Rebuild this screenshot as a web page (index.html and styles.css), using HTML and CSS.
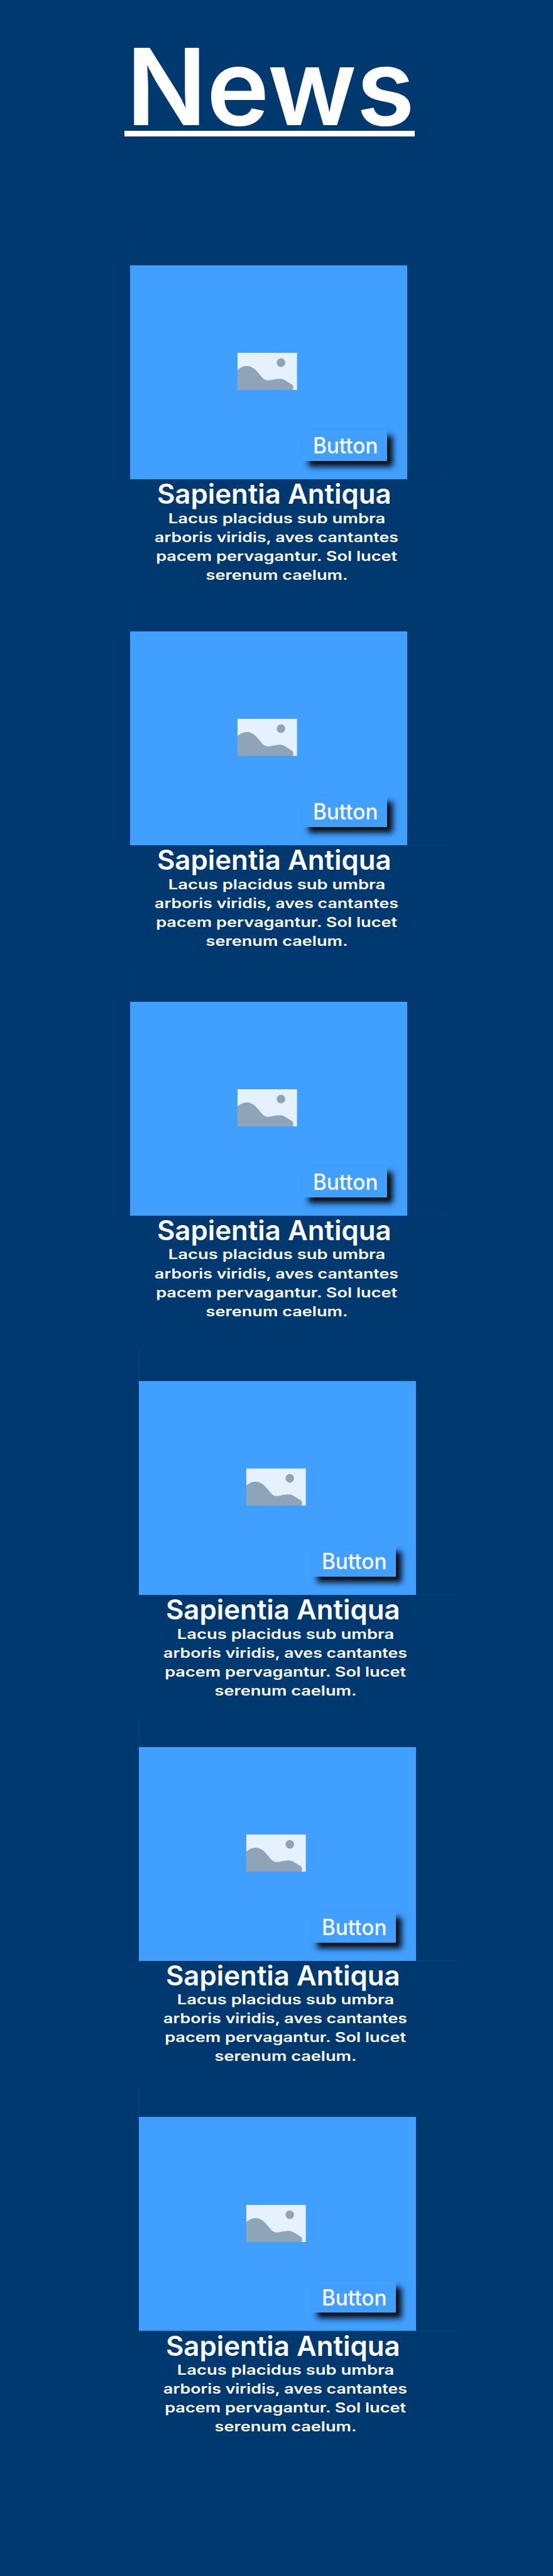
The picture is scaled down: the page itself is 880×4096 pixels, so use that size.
FILE: index.html
```
<!DOCTYPE html>
<html lang="la">
<head>
<meta charset="utf-8">
<title>News</title>
<link rel="stylesheet" href="styles.css">
</head>
<body>
<svg width="0" height="0" class="defs" aria-hidden="true">
  <symbol id="picture" viewBox="0 0 510 319" preserveAspectRatio="none">
    <rect width="510" height="319" fill="#e5f1ff"/>
    <path fill="#8fa3b9" d="M0 147C26 123 52 113 84 113C122 114 155 142 183 178C209 212 228 235 260 236C284 236 325 221 368 222C396 223 432 252 466 272Q477 280 477 290V306Q477 314 472 319H0Z"/>
    <circle cx="372" cy="84" r="36.500" fill="#8fa3b9"/>
  </symbol>
</svg>
<main class="page">
  <h1 class="heading"><span class="heading-text">News</span></h1>
  <section class="group first">
    <article class="card">
      <div class="media"><svg class="picture"><use href="#picture"/></svg><button class="btn"><span class="btn-text">Button</span></button></div>
      <h2 class="title"><span class="title-text">Sapientia Antiqua</span></h2>
      <p class="text"><span class="line first-line">Lacus placidus sub umbra</span><span class="line long">arboris viridis, aves cantantes</span><span class="line">pacem pervagantur. Sol lucet</span><span class="line">serenum caelum.</span></p>
    </article>
    <article class="card">
      <div class="media"><svg class="picture"><use href="#picture"/></svg><button class="btn"><span class="btn-text">Button</span></button></div>
      <h2 class="title"><span class="title-text">Sapientia Antiqua</span></h2>
      <p class="text"><span class="line first-line">Lacus placidus sub umbra</span><span class="line long">arboris viridis, aves cantantes</span><span class="line">pacem pervagantur. Sol lucet</span><span class="line">serenum caelum.</span></p>
    </article>
    <article class="card">
      <div class="media"><svg class="picture"><use href="#picture"/></svg><button class="btn"><span class="btn-text">Button</span></button></div>
      <h2 class="title"><span class="title-text">Sapientia Antiqua</span></h2>
      <p class="text"><span class="line first-line">Lacus placidus sub umbra</span><span class="line long">arboris viridis, aves cantantes</span><span class="line">pacem pervagantur. Sol lucet</span><span class="line">serenum caelum.</span></p>
    </article>
  </section>
  <section class="group second">
    <article class="card">
      <div class="media"><svg class="picture"><use href="#picture"/></svg><button class="btn"><span class="btn-text">Button</span></button></div>
      <h2 class="title"><span class="title-text">Sapientia Antiqua</span></h2>
      <p class="text"><span class="line first-line">Lacus placidus sub umbra</span><span class="line long">arboris viridis, aves cantantes</span><span class="line">pacem pervagantur. Sol lucet</span><span class="line">serenum caelum.</span></p>
    </article>
    <article class="card">
      <div class="media"><svg class="picture"><use href="#picture"/></svg><button class="btn"><span class="btn-text">Button</span></button></div>
      <h2 class="title"><span class="title-text">Sapientia Antiqua</span></h2>
      <p class="text"><span class="line first-line">Lacus placidus sub umbra</span><span class="line long">arboris viridis, aves cantantes</span><span class="line">pacem pervagantur. Sol lucet</span><span class="line">serenum caelum.</span></p>
    </article>
    <article class="card">
      <div class="media"><svg class="picture"><use href="#picture"/></svg><button class="btn"><span class="btn-text">Button</span></button></div>
      <h2 class="title"><span class="title-text">Sapientia Antiqua</span></h2>
      <p class="text"><span class="line first-line">Lacus placidus sub umbra</span><span class="line long">arboris viridis, aves cantantes</span><span class="line">pacem pervagantur. Sol lucet</span><span class="line">serenum caelum.</span></p>
    </article>
  </section>
</main>
</body>
</html>
```
FILE: styles.css
```
* { box-sizing: border-box; margin: 0; padding: 0; }

html, body { background: #003870; }

body {
  color: #fff;
  font-family: Inter, "Liberation Sans", sans-serif;
}

.defs { display: block; }

.page {
  height: 4096px;
  padding-top: 53.6px;
  overflow: hidden;
}

.heading {
  width: 461.2px;
  height: 163.2px;
  margin-left: 198.4px;
  padding-left: 2.5px;
  border-bottom: 9px solid #fff;
  font-size: 168.5px;
  font-weight: 600;
  line-height: 168px;
  white-space: nowrap;
}

.group {
  display: grid;
  width: 440.8px;
}

.first {
  grid-template-rows: 582px 588.8px 603.2px;
  margin: 205.3px 0 0 207.4px;
  --frame: #04407a;
}

.second {
  grid-template-rows: 581.7px 588.7px 520px;
  margin-left: 221.3px;
  --frame: #0a4682;
}

.card { position: relative; }

/* Hairline frame reaching past the picture's top and right edges */
.card::before {
  content: "";
  position: absolute;
  top: -51px;
  left: 0;
  width: 506.8px;
  height: 390.3px;
  border-left: 1px solid var(--frame);
  border-bottom: 1px solid var(--frame);
}

.media {
  position: relative;
  display: flex;
  align-items: flex-end;
  justify-content: flex-end;
  height: 339.8px;
  padding: 0 32px 29px 0;
  background: #409fff;
}

.picture {
  position: absolute;
  left: 171.1px;
  top: 139.1px;
  width: 94.8px;
  height: 59.3px;
}

.btn {
  display: flex;
  align-items: center;
  justify-content: center;
  width: 133.8px;
  height: 49px;
  border: 0;
  background: #409fff;
  box-shadow: 9px 9px 9px #0a0d12;
  color: #fafafa;
  font: 540 35.2px/48px Inter, "Liberation Sans", sans-serif;
}

.btn-text { transform: scaleX(.947); }

.title {
  display: flex;
  justify-content: center;
  height: 44px;
  margin-top: 1.3px;
  padding-left: 18px;
  font-size: 43.5px;
  font-weight: 600;
  line-height: 44px;
  white-space: nowrap;
}

.title-text { transform: scaleX(1.006); }

.text {
  display: flex;
  flex-direction: column;
  align-items: center;
  margin-top: 1.5px;
  padding-left: 25px;
  font-size: 21.5px;
  font-weight: 580;
  line-height: 30.05px;
  white-space: nowrap;
}

.line { transform: scaleX(1.262); }

.first-line { transform: scaleX(1.274); }

.long { transform: scaleX(1.243); }
```
